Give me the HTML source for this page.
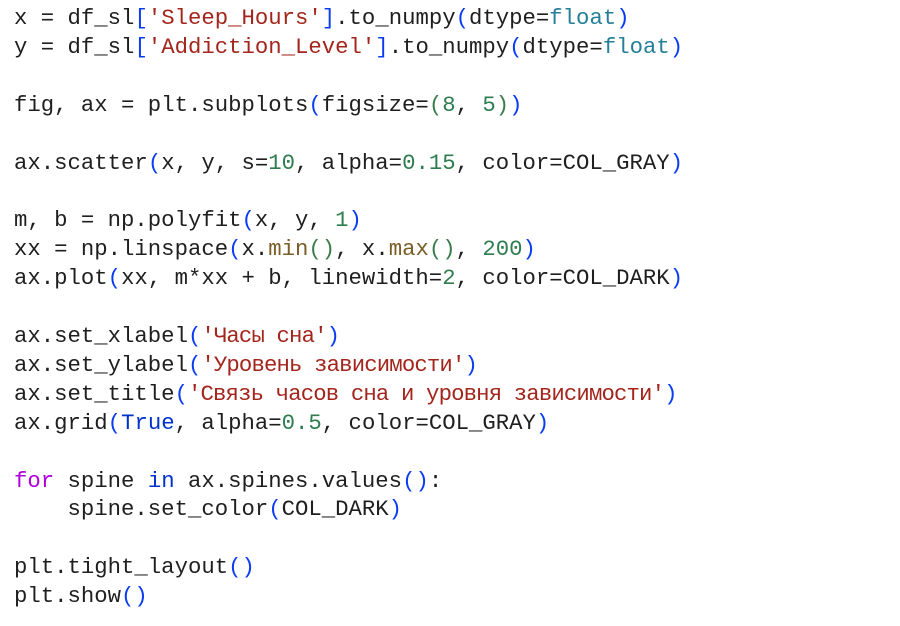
<!DOCTYPE html>
<html><head><meta charset="utf-8"><style>
html,body{margin:0;padding:0;background:#fff;width:900px;height:626px;overflow:hidden}
pre{margin:0;position:absolute;left:14px;top:4px;font-family:"Liberation Mono","DejaVu Sans Mono",monospace;font-size:22.3px;line-height:28.9px;color:#1f1f1f}
.s{color:#a3251c}.b{color:#0a3cf5}.g{color:#3a7d4a}.n{color:#2e7d4f}.t{color:#267f99}.k{color:#af00db}.f{color:#795e26}.kw{color:#0033cc}
.c{letter-spacing:-0.85px}
</style></head><body><pre>x = df_sl<span class="b">[</span><span class="s">'Sleep_Hours'</span><span class="b">]</span>.to_numpy<span class="b">(</span>dtype=<span class="t">float</span><span class="b">)</span>
y = df_sl<span class="b">[</span><span class="s">'Addiction_Level'</span><span class="b">]</span>.to_numpy<span class="b">(</span>dtype=<span class="t">float</span><span class="b">)</span>

fig, ax = plt.subplots<span class="b">(</span>figsize=<span class="g">(</span><span class="n">8</span>, <span class="n">5</span><span class="g">)</span><span class="b">)</span>

ax.scatter<span class="b">(</span>x, y, s=<span class="n">10</span>, alpha=<span class="n">0.15</span>, color=COL_GRAY<span class="b">)</span>

m, b = np.polyfit<span class="b">(</span>x, y, <span class="n">1</span><span class="b">)</span>
xx = np.linspace<span class="b">(</span>x.<span class="f">min</span><span class="g">()</span>, x.<span class="f">max</span><span class="g">()</span>, <span class="n">200</span><span class="b">)</span>
ax.plot<span class="b">(</span>xx, m*xx + b, linewidth=<span class="n">2</span>, color=COL_DARK<span class="b">)</span>

ax.set_xlabel<span class="b">(</span><span class="s c">'Часы сна'</span><span class="b">)</span>
ax.set_ylabel<span class="b">(</span><span class="s c">'Уровень зависимости'</span><span class="b">)</span>
ax.set_title<span class="b">(</span><span class="s c">'Связь часов сна и уровня зависимости'</span><span class="b">)</span>
ax.grid<span class="b">(</span><span class="kw">True</span>, alpha=<span class="n">0.5</span>, color=COL_GRAY<span class="b">)</span>

<span class="k">for</span> spine <span class="kw">in</span> ax.spines.values<span class="b">()</span>:
    spine.set_color<span class="b">(</span>COL_DARK<span class="b">)</span>

plt.tight_layout<span class="b">()</span>
plt.show<span class="b">()</span></pre></body></html>
